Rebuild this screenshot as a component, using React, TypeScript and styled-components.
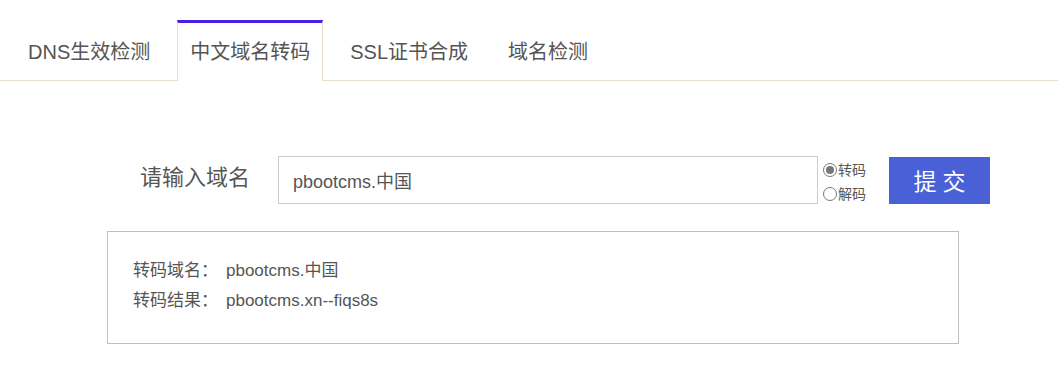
import React from "react";
import styled, { createGlobalStyle } from "styled-components";

const Global = createGlobalStyle`
  html, body { margin: 0; padding: 0; background: #fff; }
  body { font-family: "Liberation Sans", "Noto Sans CJK SC", sans-serif; color: #555; }
`;

const TabBar = styled.div`
  display: flex;
  padding: 20px 0 0 15px;
  border-bottom: 1px solid #e8e0cc;
  height: 60px;
`;

const Tab = styled.div<{ $active?: boolean }>`
  box-sizing: border-box;
  height: ${(p) => (p.$active ? "61px" : "60px")};
  margin-right: 14px;
  padding: 0 12px;
  display: flex;
  align-items: center;
  font-size: 20px;
  line-height: 1;
  color: #555;
  background: #fff;
  border-top: 3px solid ${(p) => (p.$active ? "#4b1fe0" : "transparent")};
  border-left: 1px solid ${(p) => (p.$active ? "#e8e0cc" : "transparent")};
  border-right: 1px solid ${(p) => (p.$active ? "#e8e0cc" : "transparent")};
  padding-bottom: ${(p) => (p.$active ? "1px" : "0")};
`;

const FormRow = styled.div`
  display: flex;
  align-items: center;
  margin-top: 75px;
  padding-left: 140px;
`;

const Label = styled.div`
  width: 138px;
  font-size: 22px;
  line-height: 1;
  color: #555;
  margin-top: -4px;
`;

const Input = styled.div`
  box-sizing: border-box;
  width: 540px;
  height: 48px;
  border: 1px solid #ccc;
  padding-left: 14px;
  display: flex;
  align-items: center;
  font-size: 18px;
  color: #555;
`;

const RadioGroup = styled.div`
  display: flex;
  flex-direction: column;
  gap: 6px;
  margin-left: 5px;
  padding-top: 4px;
  width: 66px;
`;

const RadioItem = styled.div`
  display: flex;
  align-items: center;
  font-size: 14px;
  line-height: 18px;
  color: #555;
`;

const Dot = styled.span<{ $checked?: boolean }>`
  box-sizing: border-box;
  width: 14px;
  height: 14px;
  border-radius: 50%;
  border: 1px solid #777;
  margin-right: 1px;
  display: flex;
  align-items: center;
  justify-content: center;
  &::after {
    content: "";
    display: ${(p) => (p.$checked ? "block" : "none")};
    width: 8px;
    height: 8px;
    border-radius: 50%;
    background: #777;
  }
`;

const Button = styled.div`
  width: 101px;
  height: 47px;
  background: #4a60d6;
  color: #fff;
  font-size: 23px;
  letter-spacing: 6px;
  padding-left: 6px;
  box-sizing: border-box;
  display: flex;
  align-items: center;
  justify-content: center;
`;

const ResultBox = styled.div`
  box-sizing: border-box;
  width: 852px;
  height: 113px;
  margin: 27px 0 0 107px;
  border: 1px solid #c0c0c0;
  padding: 24px 25px;
`;

const ResultLine = styled.div`
  display: flex;
  font-size: 17px;
  line-height: 30px;
  color: #555;
`;

const Key = styled.span`
  width: 93px;
`;

export default function App() {
  return (
    <>
      <Global />
      <TabBar>
        <Tab>DNS生效检测</Tab>
        <Tab $active>中文域名转码</Tab>
        <Tab>SSL证书合成</Tab>
        <Tab>域名检测</Tab>
      </TabBar>
      <FormRow>
        <Label>请输入域名</Label>
        <Input>pbootcms.中国</Input>
        <RadioGroup>
          <RadioItem>
            <Dot $checked />
            转码
          </RadioItem>
          <RadioItem>
            <Dot />
            解码
          </RadioItem>
        </RadioGroup>
        <Button>提交</Button>
      </FormRow>
      <ResultBox>
        <ResultLine>
          <Key>转码域名：</Key>
          <span>pbootcms.中国</span>
        </ResultLine>
        <ResultLine>
          <Key>转码结果：</Key>
          <span>pbootcms.xn--fiqs8s</span>
        </ResultLine>
      </ResultBox>
    </>
  );
}
